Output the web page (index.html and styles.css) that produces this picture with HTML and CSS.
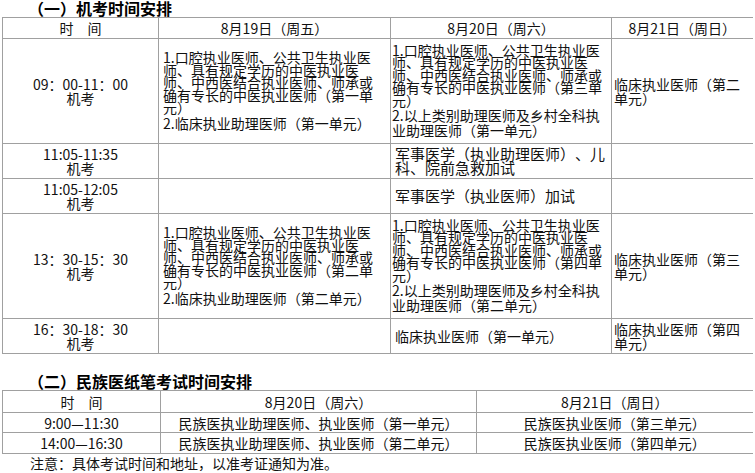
FILE: index.html
```html
<!DOCTYPE html>
<html lang="zh-CN">
<head>
<meta charset="utf-8">
<title>考试时间安排</title>
<link rel="stylesheet" href="styles.css">
</head>
<body>
<div class="page">
  <h2 class="sec">（一）机考时间安排</h2>
  <table class="grid t1">
    <colgroup>
      <col class="c1"><col class="c2"><col class="c3"><col class="c4">
    </colgroup>
    <tr class="h21">
      <th>时　间</th>
      <th>8月19日（周五）</th>
      <th>8月20日（周六）</th>
      <th>8月21日（周日）</th>
    </tr>
    <tr class="h105">
      <td class="time">09：00-11：00<br>机考</td>
      <td class="d2">
        <div class="p1">1.口腔执业医师、公共卫生执业医师、具有规定学历的中医执业医师、中西医结合执业医师、师承或确有专长的中医执业医师（第一单元）</div>
        <div class="p2">2.临床执业助理医师（第一单元）</div>
      </td>
      <td class="d3">
        <div class="p1">1.口腔执业医师、公共卫生执业医师、具有规定学历的中医执业医师、中西医结合执业医师、师承或确有专长的中医执业医师（第三单元）</div>
        <div class="p2">2.以上类别助理医师及乡村全科执业助理医师（第一单元）</div>
      </td>
      <td class="d4">临床执业医师（第二单元）</td>
    </tr>
    <tr class="h35">
      <td class="time">11:05-11:35<br>机考</td>
      <td class="d2"></td>
      <td class="d3 mil">军事医学（执业助理医师）、儿科、院前急救加试</td>
      <td class="d4"></td>
    </tr>
    <tr class="h35">
      <td class="time">11:05-12:05<br>机考</td>
      <td class="d2"></td>
      <td class="d3 mil">军事医学（执业医师）加试</td>
      <td class="d4"></td>
    </tr>
    <tr class="h105">
      <td class="time">13：30-15：30<br>机考</td>
      <td class="d2">
        <div class="p1">1.口腔执业医师、公共卫生执业医师、具有规定学历的中医执业医师、中西医结合执业医师、师承或确有专长的中医执业医师（第二单元）</div>
        <div class="p2">2.临床执业助理医师（第二单元）</div>
      </td>
      <td class="d3">
        <div class="p1">1.口腔执业医师、公共卫生执业医师、具有规定学历的中医执业医师、中西医结合执业医师、师承或确有专长的中医执业医师（第四单元）</div>
        <div class="p2">2.以上类别助理医师及乡村全科执业助理医师（第二单元）</div>
      </td>
      <td class="d4">临床执业医师（第三单元）</td>
    </tr>
    <tr class="h35">
      <td class="time">16：30-18：30<br>机考</td>
      <td class="d2"></td>
      <td class="d3 one">临床执业医师（第一单元）</td>
      <td class="d4">临床执业医师（第四单元）</td>
    </tr>
  </table>

  <h2 class="sec sec2">（二）民族医纸笔考试时间安排</h2>
  <table class="grid t2">
    <colgroup>
      <col class="k1"><col class="k2"><col class="k3">
    </colgroup>
    <tr class="h22">
      <th>时　间</th>
      <th>8月20日（周六）</th>
      <th>8月21日（周日）</th>
    </tr>
    <tr class="h20">
      <td>9:00—11:30</td>
      <td>民族医执业助理医师、执业医师（第一单元）</td>
      <td>民族医执业医师（第三单元）</td>
    </tr>
    <tr class="h21">
      <td>14:00—16:30</td>
      <td>民族医执业助理医师、执业医师（第二单元）</td>
      <td>民族医执业医师（第四单元）</td>
    </tr>
  </table>
  <p class="note">注意：具体考试时间和地址，以准考证通知为准。</p>
</div>
</body>
</html>
```

FILE: styles.css
```css
html, body {
  margin: 0;
  padding: 0;
  background: #ffffff;
}

body {
  font-family: "Noto Sans CJK SC", "Noto Sans", sans-serif;
  color: #111111;
  font-size: 14px;
  text-spacing-trim: space-all;
}

.page {
  padding-left: 2px;
  width: 760px;
}

.sec {
  margin: 0;
  padding-left: 26px;
  font-size: 16px;
  font-weight: bold;
  line-height: 17px;
  color: #000000;
}

.sec2 {
  margin-top: 19px;
}

.grid {
  border-collapse: collapse;
  table-layout: fixed;
}

.t1 { width: 750px; }
.t2 { width: 750px; }

.c1 { width: 156px; }
.c2 { width: 232px; }
.c3 { width: 221px; }
.c4 { width: 141px; }

.k1 { width: 158px; }
.k2 { width: 316px; }
.k3 { width: 276px; }

.grid th,
.grid td {
  border: 1px solid #a0a0a0;
  padding: 0 2px;
  font-weight: normal;
  font-size: 14px;
  line-height: 14px;
  text-align: center;
  vertical-align: middle;
  color: #111111;
}

.grid th:last-child,
.grid td:last-child {
  border-right: 0;
}

.h21 { height: 21px; }
.h20 { height: 20px; }
.h22 { height: 22px; }
.h35 { height: 35px; }
.h105 { height: 105px; }

.grid td.time {
  line-height: 14px;
}

.grid td.d2 {
  text-align: left;
  padding: 0 8px 0 4px;
}

.grid td.d3 {
  text-align: left;
  padding: 0 2px 0 1px;
}

.grid td.d4 {
  text-align: left;
  padding: 0 2px 0 2px;
}

.p1 {
  line-height: 12.5px;
}

.p2 {
  margin-top: 2px;
  line-height: 15px;
}

.grid td.mil {
  font-size: 15px;
  padding-left: 4px;
  line-height: 14px;
}

.grid td.one {
  padding-left: 4px;
}

.note {
  margin: 1px 0 0 0;
  padding-left: 28px;
  font-size: 14px;
  line-height: 16px;
  color: #111111;
}
```
